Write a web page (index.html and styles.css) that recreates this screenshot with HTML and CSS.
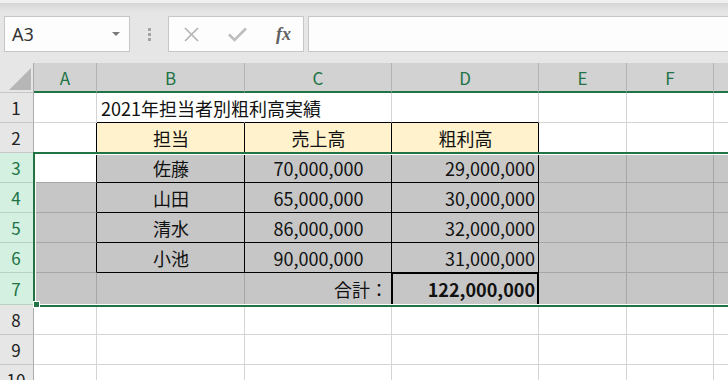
FILE: index.html
```html
<!DOCTYPE html>
<html lang="ja">
<head>
    <meta charset="UTF-8">
    <title>粗利高実績</title>
    <link rel="stylesheet" href="styles.css">
</head>
<body>
    <div class="toolbar">
        <div class="name-box">
            <span>A3</span>
            <span class="caret"></span>
        </div>
        <div class="grip"><i></i><i></i><i></i></div>
        <div class="fx-box">
            <svg class="icon-x" width="15" height="15" viewBox="0 0 15 15">
                <path d="M1 1 L14 14 M14 1 L1 14" stroke="#b3b3b3" stroke-width="1.6" fill="none"/>
            </svg>
            <svg class="icon-ok" width="19" height="15" viewBox="0 0 19 15">
                <path d="M1 7.5 L6.5 13 L18 1.5" stroke="#bdbdbd" stroke-width="2.6" fill="none"/>
            </svg>
            <span class="fx">fx</span>
        </div>
        <div class="formula"></div>
    </div>

    <div class="sheet">
        <div class="row head">
            <div class="corner"></div>
            <div class="h">A</div>
            <div class="h">B</div>
            <div class="h">C</div>
            <div class="h">D</div>
            <div class="h">E</div>
            <div class="h">F</div>
            <div class="h"></div>
        </div>
        <div class="row">
            <div class="rh">1</div>
            <div class="c"></div>
            <div class="c title tb-top">2021年担当者別粗利高実績</div>
            <div class="c tb-top"></div>
            <div class="c tb-top"></div>
            <div class="c"></div>
            <div class="c"></div>
            <div class="c"></div>
        </div>
        <div class="row">
            <div class="rh">2</div>
            <div class="c tb-left"></div>
            <div class="c tb th center">担当</div>
            <div class="c tb th center">売上高</div>
            <div class="c tb th center">粗利高</div>
            <div class="c"></div>
            <div class="c"></div>
            <div class="c"></div>
        </div>
        <div class="row sel">
            <div class="rh">3</div>
            <div class="c active tb-left"></div>
            <div class="c tb center">佐藤</div>
            <div class="c tb center">70,000,000</div>
            <div class="c tb right">29,000,000</div>
            <div class="c"></div>
            <div class="c"></div>
            <div class="c"></div>
        </div>
        <div class="row sel">
            <div class="rh">4</div>
            <div class="c tb-left"></div>
            <div class="c tb center">山田</div>
            <div class="c tb center">65,000,000</div>
            <div class="c tb right">30,000,000</div>
            <div class="c"></div>
            <div class="c"></div>
            <div class="c"></div>
        </div>
        <div class="row sel">
            <div class="rh">5</div>
            <div class="c tb-left"></div>
            <div class="c tb center">清水</div>
            <div class="c tb center">86,000,000</div>
            <div class="c tb right">32,000,000</div>
            <div class="c"></div>
            <div class="c"></div>
            <div class="c"></div>
        </div>
        <div class="row sel">
            <div class="rh">6</div>
            <div class="c tb-left"></div>
            <div class="c tb center">小池</div>
            <div class="c tb center">90,000,000</div>
            <div class="c tb right">31,000,000</div>
            <div class="c"></div>
            <div class="c"></div>
            <div class="c"></div>
        </div>
        <div class="row sel tall">
            <div class="rh">7</div>
            <div class="c"></div>
            <div class="c"></div>
            <div class="c right tb-left">合計：</div>
            <div class="c right total">122,000,000</div>
            <div class="c"></div>
            <div class="c"></div>
            <div class="c"></div>
        </div>
        <div class="row">
            <div class="rh">8</div>
            <div class="c"></div><div class="c"></div><div class="c"></div><div class="c"></div>
            <div class="c"></div><div class="c"></div><div class="c"></div>
        </div>
        <div class="row">
            <div class="rh">9</div>
            <div class="c"></div><div class="c"></div><div class="c"></div><div class="c"></div>
            <div class="c"></div><div class="c"></div><div class="c"></div>
        </div>
        <div class="row">
            <div class="rh">10</div>
            <div class="c"></div><div class="c"></div><div class="c"></div><div class="c"></div>
            <div class="c"></div><div class="c"></div><div class="c"></div>
        </div>

        <!-- 選択範囲 3:7 -->
        <div class="selection"><span class="handle"></span></div>
    </div>
</body>
</html>
```

FILE: styles.css
```css
body {
    margin: 0;
    background: #fff;
    overflow: hidden;
    font-family: "Noto Sans CJK JP", sans-serif;
}

/* 数式バー */
.toolbar {
    height: 63px;
    box-sizing: border-box;
    border-top: 3px solid #f1f0ef;
    background: linear-gradient(#d5d5d5, #e6e6e6 9px);
    display: flex;
    align-items: flex-start;
    padding: 13px 0 0 4px;
    overflow: hidden;
}
.name-box {
    width: 126px;
    height: 36px;
    box-sizing: border-box;
    background: #fdfdfd;
    border: 1px solid #c6c6c6;
    display: flex;
    align-items: center;
    justify-content: space-between;
    padding: 0 7px 0 7px;
    font-family: "Noto Sans", sans-serif;
    font-size: 18px;
    color: #333;
}
.caret {
    width: 0;
    height: 0;
    border-left: 4px solid transparent;
    border-right: 4px solid transparent;
    border-top: 4px solid #7a7a7a;
    margin-right: 2px;
}
.grip {
    width: 38px;
    height: 36px;
    display: flex;
    flex-direction: column;
    align-items: center;
    justify-content: center;
    gap: 2px;
}
.grip i {
    width: 3px;
    height: 3px;
    background: #a3a3a3;
}
.fx-box {
    width: 136px;
    height: 36px;
    box-sizing: border-box;
    background: #fdfdfd;
    border: 1px solid #c6c6c6;
    display: flex;
    align-items: center;
}
.icon-x {
    margin-left: 15px;
}
.icon-ok {
    margin-left: 29px;
}
.fx {
    margin-left: 29px;
    font-family: "Liberation Serif", serif;
    font-style: italic;
    font-weight: bold;
    font-size: 18px;
    color: #606060;
    line-height: 1;
}
.formula {
    flex: 1;
    height: 36px;
    box-sizing: border-box;
    margin-left: 4px;
    margin-right: -2px;
    background: #fdfdfd;
    border: 1px solid #c6c6c6;
}

/* シート */
.sheet {
    position: relative;
    font-size: 18px;
    color: #111;
}
.row {
    display: grid;
    grid-template-columns: 34px 63px 148px 147px 147px 88px 87px 60px;
    height: 30px;
}
.row.tall {
    height: 32px;
}
.row > div {
    box-sizing: border-box;
    display: flex;
    align-items: center;
    white-space: nowrap;
    line-height: 1;
}
.c {
    border-right: 1px solid #d4d4d4;
    border-bottom: 1px solid #d4d4d4;
    padding: 0 3px 0 4px;
}
.center {
    justify-content: center;
}
.right {
    justify-content: flex-end;
}

.corner {
    position: relative;
    background: #e6e6e6;
    border-right: 1px solid #ababab;
    border-bottom: 1px solid #c6c6c6;
}
.corner::after {
    content: "";
    position: absolute;
    left: 9px;
    top: 5px;
    width: 22px;
    height: 22px;
    background: #b6b6b6;
    clip-path: polygon(100% 0, 100% 100%, 0 100%);
}
.h {
    background: #d2d2d2;
    border-right: 1px solid #b3b3b3;
    border-bottom: 2px solid #217346;
    color: #217346;
    justify-content: center;
    font-size: 17px;
}
.rh {
    background: #e6e6e6;
    border-right: 1px solid #ababab;
    border-bottom: 1px solid #c8c8c8;
    justify-content: center;
    color: #222;
    font-size: 17px;
    padding-right: 1px;
}
.sel .rh {
    background: #d3f0e0;
    border-bottom-color: #b9d3c3;
    color: #217346;
}

.sel .c {
    background: #c6c6c6;
    border-color: #a6a6a6;
}
.c.active {
    background: #fff;
}

.title {
    overflow: visible;
    border-right-color: transparent;
}
.c.tb-top {
    border-bottom-color: #000;
}
.c.tb-left {
    border-right-color: #000;
}
.c.tb {
    border-right-color: #000;
    border-bottom-color: #000;
}
.c.th {
    background: #fff2cc;
}
.c.total {
    font-weight: bold;
    border-right: 2px solid #000;
    box-shadow: inset 1px 1px 0 #000;
    padding-right: 2px;
}

.selection {
    position: absolute;
    top: 89px;
    left: 33px;
    right: -20px;
    height: 155px;
    box-sizing: border-box;
    border: 2px solid #217346;
    box-shadow: inset 0 0 0 1px #fff;
    pointer-events: none;
}
.handle {
    position: absolute;
    left: -2px;
    bottom: -3px;
    width: 5px;
    height: 5px;
    background: #217346;
    border: 1px solid #fff;
}
```
